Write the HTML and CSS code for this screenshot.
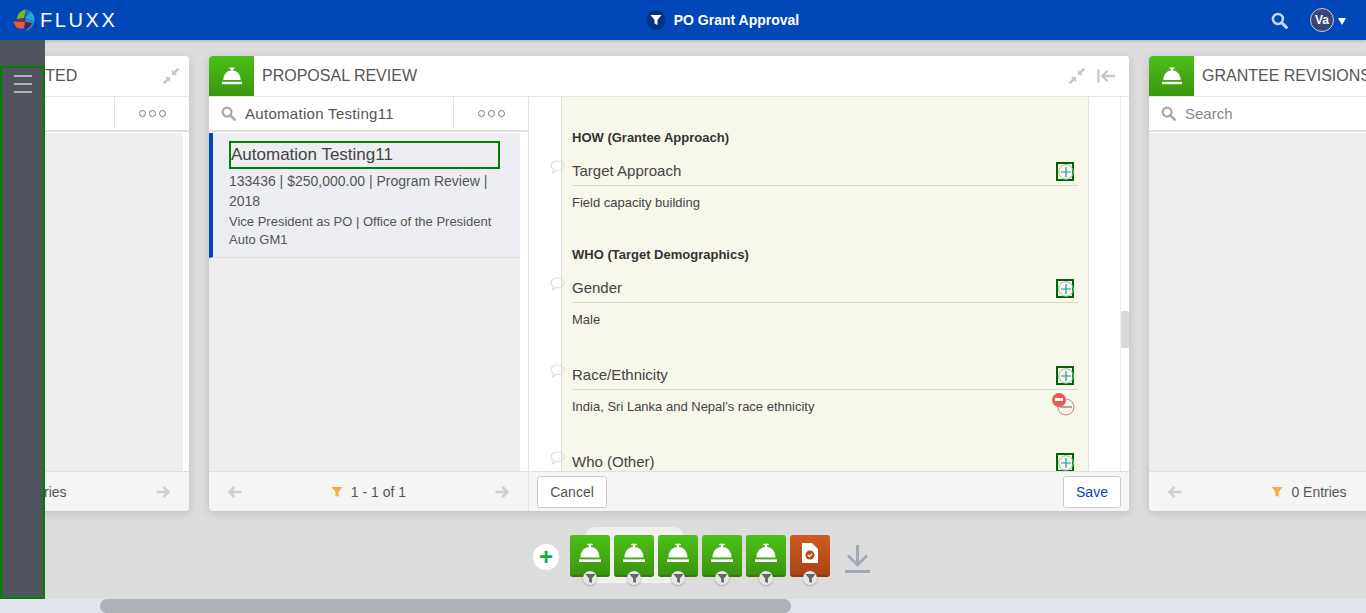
FILE: index.html
```html
<!DOCTYPE html>
<html lang="en">
<head>
    <meta charset="UTF-8">
    <title>PO Grant Approval</title>
    <link rel="stylesheet" href="styles.css">
</head>
<body>

    <svg class="icon-defs" width="0" height="0">
        <symbol id="bell" viewBox="0 0 20 18">
            <path d="M7.500 0.500h5v1.400h-1.500v1.700c4.400.4 7.400 3.900 7.700 9.400H1.300C1.600 7.500 4.600 4 9 3.600V1.900H7.500z" fill="currentColor"/>
            <rect x="0" y="14.800" width="20" height="2.400" fill="currentColor"/>
        </symbol>
        <symbol id="funnel" viewBox="0 0 12 12">
            <path d="M0.500 1h11L7.500 6v5L4.500 9.500V6z" fill="currentColor"/>
        </symbol>
        <symbol id="search" viewBox="0 0 16 16">
            <circle cx="6.500" cy="6.500" r="4.700" fill="none" stroke="currentColor" stroke-width="2.400"/>
            <path d="M10 10l4.500 4.500" stroke="currentColor" stroke-width="2.800" stroke-linecap="round"/>
        </symbol>
        <symbol id="compress" viewBox="0 0 16 16">
            <path d="M15.500 0.500L10.500 5.500M0.500 15.500L5.500 10.500" stroke="currentColor" stroke-width="2.600"/>
            <path d="M8.800 1.800L9 7l5.200.2zM1.800 8.800L7 9l.2 5.200z" fill="currentColor"/>
        </symbol>
        <symbol id="arrow-right" viewBox="0 0 14 12">
            <path d="M0.500 6H12M7.500 1L12.500 6L7.500 11" fill="none" stroke="currentColor" stroke-width="2.600"/>
        </symbol>
        <symbol id="arrow-left" viewBox="0 0 14 12">
            <path d="M13.500 6H2M6.500 1L1.500 6L6.500 11" fill="none" stroke="currentColor" stroke-width="2.600"/>
        </symbol>
        <symbol id="bubble" viewBox="0 0 15 14">
            <path d="M7.500 1C3.800 1 1 3 1 5.700c0 1.600 1 2.900 2.500 3.800L2.500 13l3.800-2.600c.4 0 .8.100 1.200.100 3.700 0 6.500-2.100 6.500-4.800S11.200 1 7.500 1z" fill="none" stroke="#dedfdc" stroke-width="1.200"/>
        </symbol>
        <symbol id="plus-round" viewBox="0 0 16 16">
            <circle cx="8" cy="8" r="7.300" fill="none" stroke="#9dbdb4" stroke-width="1"/>
            <path d="M8 3v10M3 8h10" stroke="#1e9aa0" stroke-width="1.200"/>
        </symbol>
    </svg>

    <header class="topbar">
        <a class="brand">
            <svg class="brand-mark" width="24" height="24" viewBox="0 0 24 24">
                <path d="M5 11C5 6 9 2 14 1.500L12 10z" fill="#7ab51d"/>
                <path d="M14 1.500c2 .3 4 1 5 2L13 10z" fill="#2b6fb0"/>
                <path d="M19 3.500c3 3 4 7 3.500 10L13 10z" fill="#27a7d8"/>
                <path d="M22.500 13.500C21.500 18 19 20.500 15 22.500l-2-12z" fill="#1d8fc2"/>
                <path d="M1 11.500l11-1L13 14z" fill="#8e2135"/>
                <path d="M1 13.500L13 14l-1 6c-3 1-6 .5-8-1z" fill="#f0563c"/>
                <path d="M13 14l7 1c-1 3-3 5-6 6z" fill="#5a1f38"/>
            </svg>
            <span class="brand-name">FLUXX</span>
        </a>
        <div class="page-title">
            <span class="title-badge"><svg width="12" height="12"><use href="#funnel"/></svg></span>
            PO Grant Approval
        </div>
        <div class="topbar-right">
            <svg class="top-search" width="17" height="17"><use href="#search"/></svg>
            <span class="avatar">Va</span>
            <span class="caret"></span>
        </div>
    </header>

    <aside class="side-rail">
        <div class="side-outline">
            <div class="burger"><span></span><span></span><span></span></div>
        </div>
    </aside>

    <main class="canvas">
        <div class="board">

            <section class="card card-first">
                <div class="card-head">
                    <span class="card-icon"><svg width="20" height="18"><use href="#bell"/></svg></span>
                    <h3>GROUP SUBMITTED</h3>
                    <div class="head-tools">
                        <svg class="tool" width="16" height="16"><use href="#compress"/></svg>
                    </div>
                </div>
                <div class="list-col">
                    <div class="search-row">
                        <svg class="search-icon" width="15" height="15"><use href="#search"/></svg>
                        <span class="search-text muted">Search</span>
                        <span class="more"><i></i><i></i><i></i></span>
                    </div>
                    <div class="list-body"><div class="list-main"></div><div class="list-track"></div></div>
                    <div class="card-foot">
                        <svg class="nav-arrow" width="14" height="12"><use href="#arrow-left"/></svg>
                        <span class="count"><svg class="count-funnel" width="12" height="12"><use href="#funnel"/></svg>0 Entries</span>
                        <svg class="nav-arrow" width="14" height="12"><use href="#arrow-right"/></svg>
                    </div>
                </div>
            </section>

            <section class="card card-wide">
                <div class="card-head">
                    <span class="card-icon"><svg width="20" height="18"><use href="#bell"/></svg></span>
                    <h3>PROPOSAL REVIEW</h3>
                    <div class="head-tools">
                        <svg class="tool" width="16" height="16"><use href="#compress"/></svg>
                        <svg class="tool tool-pin" width="19" height="16" viewBox="0 0 20 16"><path d="M1.500 1v14M19 8H6M11 2.500L5.500 8l5.500 5.500" fill="none" stroke="currentColor" stroke-width="2.400"/></svg>
                    </div>
                </div>
                <div class="card-split">
                    <div class="list-col">
                        <div class="search-row">
                            <svg class="search-icon" width="15" height="15"><use href="#search"/></svg>
                            <span class="search-text search-filled">Automation Testing11</span>
                            <span class="more"><i></i><i></i><i></i></span>
                        </div>
                        <div class="list-body">
                            <div class="list-main">
                                <article class="list-item">
                                    <div class="item-title">Automation Testing11</div>
                                    <p class="item-meta">133436 | $250,000.00 | Program Review | 2018</p>
                                    <p class="item-sub">Vice President as PO | Office of the President<br>Auto GM1</p>
                                </article>
                            </div>
                            <div class="list-track"></div>
                        </div>
                        <div class="card-foot">
                            <svg class="nav-arrow" width="14" height="12"><use href="#arrow-left"/></svg>
                            <span class="count"><svg class="count-funnel" width="12" height="12"><use href="#funnel"/></svg>1 - 1 of 1</span>
                            <svg class="nav-arrow" width="14" height="12"><use href="#arrow-right"/></svg>
                        </div>
                    </div>
                    <div class="detail-col">
                        <div class="detail-scroll">
                            <div class="detail-page">
                                <div class="form-sheet">
                                    <h4 class="group-title">HOW (Grantee Approach)</h4>
                                    <div class="field">
                                        <div class="field-head">
                                            <svg class="bubble" width="15" height="14"><use href="#bubble"/></svg>
                                            <span class="field-label">Target Approach</span>
                                            <span class="add-box"><svg width="16" height="16"><use href="#plus-round"/></svg></span>
                                        </div>
                                        <div class="field-value">Field capacity building</div>
                                    </div>
                                    <h4 class="group-title">WHO (Target Demographics)</h4>
                                    <div class="field">
                                        <div class="field-head">
                                            <svg class="bubble" width="15" height="14"><use href="#bubble"/></svg>
                                            <span class="field-label">Gender</span>
                                            <span class="add-box"><svg width="16" height="16"><use href="#plus-round"/></svg></span>
                                        </div>
                                        <div class="field-value">Male</div>
                                    </div>
                                    <div class="field field-next">
                                        <div class="field-head">
                                            <svg class="bubble" width="15" height="14"><use href="#bubble"/></svg>
                                            <span class="field-label">Race/Ethnicity</span>
                                            <span class="add-box"><svg width="16" height="16"><use href="#plus-round"/></svg></span>
                                        </div>
                                        <div class="field-value">
                                            India, Sri Lanka and Nepal's race ethnicity
                                            <span class="remove-wrap">
                                                <svg width="18" height="18" viewBox="0 0 18 18"><circle cx="9" cy="9" r="8" fill="none" stroke="#c98a7a"/><path d="M3 9h12" stroke="#a8867c" stroke-width="1.500"/></svg>
                                                <span class="remove-badge"></span>
                                            </span>
                                        </div>
                                    </div>
                                    <div class="field field-next">
                                        <div class="field-head">
                                            <svg class="bubble" width="15" height="14"><use href="#bubble"/></svg>
                                            <span class="field-label">Who (Other)</span>
                                            <span class="add-box"><svg width="16" height="16"><use href="#plus-round"/></svg></span>
                                        </div>
                                    </div>
                                </div>
                            </div>
                            <div class="detail-track"><div class="detail-thumb"></div></div>
                        </div>
                        <div class="detail-foot">
                            <button class="btn">Cancel</button>
                            <button class="btn btn-save">Save</button>
                        </div>
                    </div>
                </div>
            </section>

            <section class="card card-last">
                <div class="card-head">
                    <span class="card-icon"><svg width="20" height="18"><use href="#bell"/></svg></span>
                    <h3>GRANTEE REVISIONS</h3>
                </div>
                <div class="list-col">
                    <div class="search-row">
                        <svg class="search-icon" width="15" height="15"><use href="#search"/></svg>
                        <span class="search-text muted">Search</span>
                    </div>
                    <div class="list-body"><div class="list-main"></div><div class="list-track"></div></div>
                    <div class="card-foot">
                        <svg class="nav-arrow" width="14" height="12"><use href="#arrow-left"/></svg>
                        <span class="count"><svg class="count-funnel" width="12" height="12"><use href="#funnel"/></svg>0 Entries</span>
                        <svg class="nav-arrow" width="14" height="12"><use href="#arrow-right"/></svg>
                    </div>
                </div>
            </section>

        </div>

        <div class="dock">
            <span class="dock-add">+</span>
            <div class="dock-items">
                <div class="dock-tray"></div>
                <div class="dock-btn"><svg width="22" height="20"><use href="#bell"/></svg><span class="dock-badge"><svg width="11" height="11"><use href="#funnel"/></svg></span></div>
                <div class="dock-btn"><svg width="22" height="20"><use href="#bell"/></svg><span class="dock-badge"><svg width="11" height="11"><use href="#funnel"/></svg></span></div>
                <div class="dock-btn"><svg width="22" height="20"><use href="#bell"/></svg><span class="dock-badge"><svg width="11" height="11"><use href="#funnel"/></svg></span></div>
                <div class="dock-btn"><svg width="22" height="20"><use href="#bell"/></svg><span class="dock-badge"><svg width="11" height="11"><use href="#funnel"/></svg></span></div>
                <div class="dock-btn"><svg width="22" height="20"><use href="#bell"/></svg><span class="dock-badge"><svg width="11" height="11"><use href="#funnel"/></svg></span></div>
                <div class="dock-btn dock-btn-report">
                    <svg width="16" height="20" viewBox="0 0 16 20"><path d="M0 0h10l6 6v14H0z" fill="#fff"/><circle cx="8" cy="12" r="4.500" fill="#b64c1c"/><path d="M5.800 12l1.600 1.600 2.800-3" fill="none" stroke="#fff" stroke-width="1.300"/></svg>
                    <span class="dock-badge"><svg width="11" height="11"><use href="#funnel"/></svg></span>
                </div>
            </div>
            <svg class="dock-download" width="25" height="28" viewBox="0 0 25 28"><path d="M12.500 0v19M3 10.500l9.500 9.500 9.500-9.500" fill="none" stroke="#a3a9bd" stroke-width="3"/><rect y="25" width="25" height="3" fill="#a3a9bd"/></svg>
        </div>
    </main>

    <div class="hscroll"><div class="hscroll-thumb"></div></div>

</body>
</html>
```

FILE: styles.css
```css
* {
    box-sizing: border-box;
}

html, body {
    height: 100%;
}

body {
    margin: 0;
    display: flex;
    flex-direction: column;
    overflow: hidden;
    font-family: "Liberation Sans", Arial, sans-serif;
    color: #444;
    background: #dcdcdc;
}

.icon-defs {
    position: absolute;
}

/* Top bar */
.topbar {
    flex: none;
    height: 40px;
    display: flex;
    align-items: center;
    justify-content: space-between;
    padding: 0 20px 0 12px;
    background: #0047b8;
    color: #fff;
    box-shadow: 0 1px 3px rgba(0, 0, 0, 0.2);
}

.brand {
    display: flex;
    align-items: center;
    width: 300px;
}

.brand-name {
    margin-left: 4px;
    font-size: 20px;
    letter-spacing: 2.6px;
}

.page-title {
    display: flex;
    align-items: center;
    margin-left: 87px;
    font-size: 14px;
    font-weight: bold;
}

.title-badge {
    width: 20px;
    height: 20px;
    margin-right: 8px;
    display: flex;
    align-items: center;
    justify-content: center;
    border-radius: 50%;
    background: #003388;
}

.topbar-right {
    width: 300px;
    display: flex;
    align-items: center;
    justify-content: flex-end;
}

.top-search {
    color: #c3d6f2;
    margin-right: 22px;
}

.avatar {
    width: 24px;
    height: 24px;
    display: flex;
    align-items: center;
    justify-content: center;
    border-radius: 50%;
    border: 1px solid #c8cfdf;
    background: #3a4577;
    font-size: 12px;
    font-weight: bold;
}

.caret {
    margin-left: 4px;
    margin-top: 3px;
    border-left: 4px solid transparent;
    border-right: 4px solid transparent;
    border-top: 7px solid #fff;
}

/* Left rail over the board */
.side-rail {
    position: absolute;
    left: 0;
    top: 40px;
    z-index: 5;
    width: 45px;
    height: 559px;
    padding-top: 26px;
    background: #50545e;
}

.side-outline {
    height: 100%;
    border: 2px solid #008000;
    padding: 7px 11px 8px 12px;
}

.burger span {
    display: block;
    height: 2px;
    margin-bottom: 6px;
    background: #aeb1b7;
}

/* Board */
.canvas {
    flex: 1;
    min-height: 0;
    display: flex;
    flex-direction: column;
    overflow: hidden;
}

.board {
    flex: none;
    display: flex;
    gap: 20px;
    margin-left: -131px;
    padding-top: 16px;
}

.card {
    flex: none;
    height: 455px;
    display: flex;
    flex-direction: column;
    background: #fff;
    border-radius: 4px;
    box-shadow: 0 2px 8px rgba(0, 0, 0, 0.14);
    overflow: hidden;
}

.card-first,
.card-last {
    width: 320px;
}

.card-wide {
    width: 920px;
}

.card-head {
    flex: none;
    height: 40px;
    display: flex;
    align-items: center;
    background: #fff;
}

.card-head h3 {
    margin: 0 0 0 8px;
    font-size: 16px;
    font-weight: normal;
    color: #555;
    white-space: nowrap;
}

.card-icon {
    flex: none;
    width: 45px;
    height: 40px;
    display: flex;
    align-items: center;
    justify-content: center;
    color: #fff;
    background: linear-gradient(#4cc018, #3a9610);
}

.head-tools {
    margin-left: auto;
    display: flex;
    align-items: center;
    padding-right: 10px;
}

.card-wide .head-tools {
    padding-right: 13px;
}

.tool {
    color: #c8c8c8;
}

.tool-pin {
    margin-left: 12px;
}

.card-split {
    flex: 1;
    min-height: 0;
    display: flex;
}

.list-col {
    flex: none;
    width: 320px;
    height: 415px;
    display: flex;
    flex-direction: column;
}

.card-wide .list-col {
    width: 319px;
}

.search-row {
    flex: none;
    height: 36px;
    display: flex;
    align-items: center;
    padding: 0 0 1px 12px;
    border-top: 1px solid #e6e6e6;
    border-bottom: 2px solid #e0e0e0;
    font-size: 15px;
}

.search-icon {
    flex: none;
    color: #a9a9a9;
    margin-right: 9px;
}

.search-text {
    white-space: nowrap;
    color: #555;
}

.search-filled {
    letter-spacing: 0.3px;
}

.search-text.muted {
    color: #888;
}

.more {
    margin-left: auto;
    width: 75px;
    height: 100%;
    display: flex;
    align-items: center;
    justify-content: center;
    gap: 3px;
    border-left: 1px solid #e3e3e3;
}

.more i {
    width: 7px;
    height: 7px;
    border: 1px solid #777;
    border-radius: 50%;
}

.list-body {
    flex: 1;
    min-height: 0;
    display: flex;
    padding-top: 1px;
}

.list-main {
    flex: 1;
    background: #eeeeee;
}

.list-track {
    flex: none;
    width: 6px;
    background: #fff;
}

.card-wide .list-track {
    width: 8px;
}

.list-item {
    height: 125px;
    padding: 8px 20px 0 16px;
    background: #eceef3;
    border-left: 4px solid #0047b8;
    border-bottom: 1px solid #dedede;
}

.item-title {
    height: 28px;
    line-height: 24px;
    border: 2px solid #008000;
    font-size: 17px;
    color: #444;
    white-space: nowrap;
}

.item-meta,
.item-sub {
    margin: 0;
    color: #555;
}

.item-meta {
    margin-top: 2px;
    font-size: 14px;
    line-height: 20px;
}

.item-sub {
    margin-top: 2px;
    font-size: 13px;
    line-height: 18px;
}

.card-foot {
    flex: none;
    height: 40px;
    display: flex;
    align-items: center;
    justify-content: space-between;
    padding: 0 19px;
    background: #f5f5f5;
    border-top: 1px solid #e0e0e0;
}

.nav-arrow {
    color: #cfcfcf;
}

.count {
    display: flex;
    align-items: center;
    font-size: 14px;
    color: #555;
}

.count-funnel {
    color: #f9a93f;
    margin-right: 8px;
}

/* Detail column */
.detail-col {
    flex: 1;
    min-width: 0;
    height: 415px;
    display: flex;
    flex-direction: column;
    border-left: 1px solid #e3e3e3;
    border-top: 1px solid #e6e6e6;
}

.detail-scroll {
    flex: 1;
    min-height: 0;
    display: flex;
    overflow: hidden;
}

.detail-page {
    flex: 1;
    padding: 0 31px 0 32px;
    background: #fff;
}

.form-sheet {
    padding: 33px 10px 0;
    background: #f7f7ec;
    border-left: 1px solid #dcdcdc;
    border-right: 1px solid #e4e4e4;
    height: 600px;
}

.detail-track {
    flex: none;
    width: 9px;
    background: #fff;
    border-left: 1px solid #eee;
    padding-top: 214px;
}

.detail-thumb {
    height: 37px;
    background: #d9d9d9;
    border-radius: 2px;
}

.group-title {
    margin: 0;
    font-size: 13px;
    line-height: 16px;
    font-weight: bold;
    color: #333;
}

.field {
    margin-top: 14px;
    margin-bottom: 36px;
}

.field-next {
    margin-top: 0;
}

.field-head {
    height: 26px;
    display: flex;
    align-items: center;
    border-bottom: 1px solid #d9d9d0;
}

.bubble {
    flex: none;
    margin-left: -22px;
    margin-right: 7px;
    margin-bottom: 12px;
}

.field-label {
    margin-bottom: 5px;
    font-size: 15px;
    color: #444;
}

.add-box {
    margin-left: auto;
    margin-right: 4px;
    margin-bottom: 2px;
    width: 18px;
    height: 19px;
    display: flex;
    align-items: center;
    justify-content: center;
    border: 2px solid #006400;
}

.add-box svg {
    flex: none;
    margin: 1px -2px 0 -1px;
}

.field-value {
    position: relative;
    min-height: 16px;
    margin-top: 9px;
    font-size: 13px;
    line-height: 16px;
    color: #444;
}

.remove-wrap {
    position: absolute;
    right: 3px;
    top: -1px;
    width: 18px;
    height: 18px;
}

.remove-badge {
    position: absolute;
    left: -5px;
    top: -5px;
    width: 14px;
    height: 14px;
    border-radius: 50%;
    background: #e85a55;
}

.remove-badge::after {
    content: "";
    position: absolute;
    left: 3px;
    top: 5px;
    width: 8px;
    height: 3px;
    background: #fff;
}

.detail-foot {
    flex: none;
    height: 40px;
    display: flex;
    align-items: center;
    justify-content: space-between;
    padding: 0 8px;
    background: #f5f5f5;
    border-top: 1px solid #e0e0e0;
}

.btn {
    height: 32px;
    width: 70px;
    background: #fff;
    border: 1px solid #ccc;
    border-radius: 3px;
    font-family: inherit;
    font-size: 14px;
    color: #555;
}

.btn-save {
    width: 58px;
    color: #0047b8;
}

/* Dock */
.dock {
    flex: none;
    display: flex;
    align-items: flex-start;
    padding: 24px 0 0 533px;
}

.dock-add {
    flex: none;
    width: 26px;
    height: 26px;
    margin-top: 9px;
    margin-right: 11px;
    border-radius: 50%;
    background: #fff;
    color: #12a94c;
    font-size: 24px;
    font-weight: bold;
    line-height: 25px;
    text-align: center;
}

.dock-items {
    position: relative;
    display: flex;
    gap: 4px;
}

.dock-tray {
    position: absolute;
    left: 15px;
    top: -8px;
    width: 99px;
    height: 56px;
    background: #efefef;
    border-radius: 10px;
}

.dock-btn {
    position: relative;
    width: 40px;
    height: 42px;
    display: flex;
    align-items: center;
    justify-content: center;
    padding-bottom: 4px;
    color: #fff;
    border-radius: 3px;
    background: linear-gradient(#4cc018, #3a9610);
    border-bottom: 2px solid #317f0d;
}

.dock-btn-report {
    background: linear-gradient(#cf5a20, #a84515);
    border-bottom-color: #8f3a12;
}

.dock-badge {
    position: absolute;
    left: 13px;
    top: 36px;
    width: 14px;
    height: 14px;
    display: flex;
    align-items: center;
    justify-content: center;
    border-radius: 50%;
    background: #e6e6e6;
    color: #666;
    box-shadow: 0 1px 2px rgba(0, 0, 0, 0.25);
}

.dock-download {
    flex: none;
    margin: 10px 0 0 15px;
}

/* Page scrollbar */
.hscroll {
    flex: none;
    height: 14px;
    padding-left: 100px;
    background: #e1e4ed;
}

.hscroll-thumb {
    width: 691px;
    height: 100%;
    background: #aeb1b5;
    border-radius: 7px;
}
```
